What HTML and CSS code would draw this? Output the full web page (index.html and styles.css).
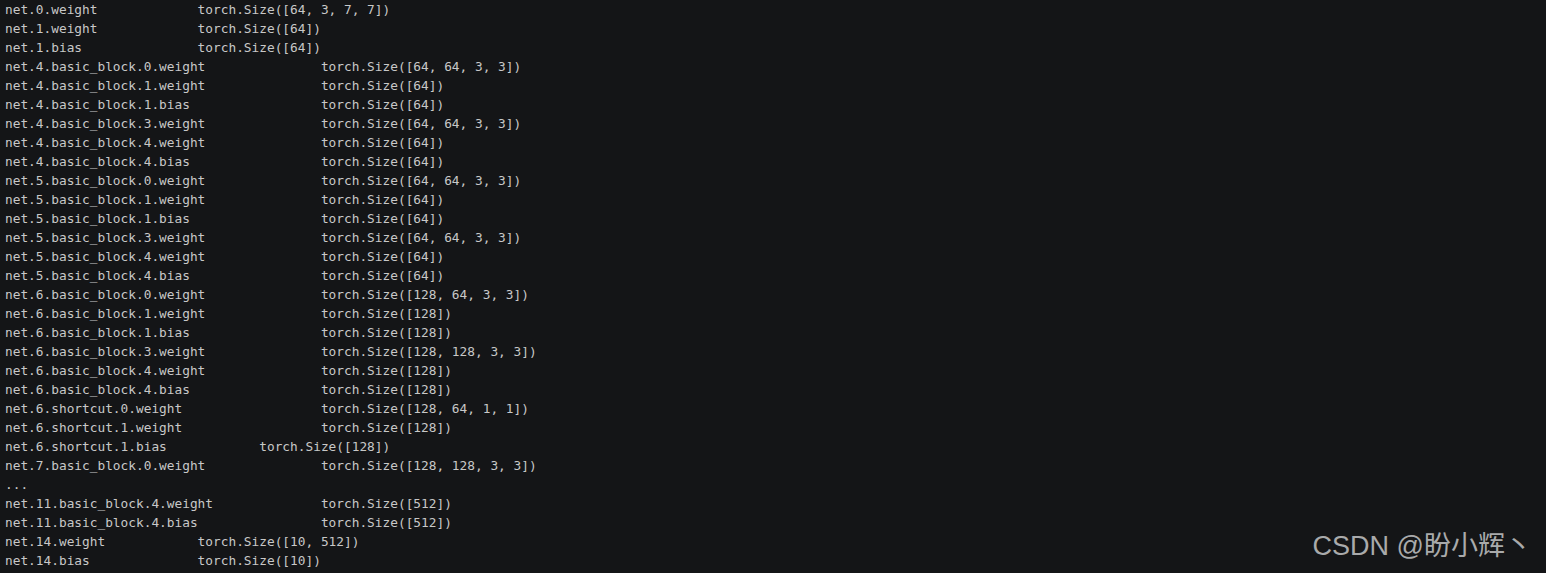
FILE: index.html
```html
<!DOCTYPE html>
<html>
<head>
<meta charset="utf-8">
<link rel="stylesheet" href="styles.css">
</head>
<body>
<div class="term"><pre class="out">net.0.weight             torch.Size([64, 3, 7, 7])
net.1.weight             torch.Size([64])
net.1.bias               torch.Size([64])
net.4.basic_block.0.weight               torch.Size([64, 64, 3, 3])
net.4.basic_block.1.weight               torch.Size([64])
net.4.basic_block.1.bias                 torch.Size([64])
net.4.basic_block.3.weight               torch.Size([64, 64, 3, 3])
net.4.basic_block.4.weight               torch.Size([64])
net.4.basic_block.4.bias                 torch.Size([64])
net.5.basic_block.0.weight               torch.Size([64, 64, 3, 3])
net.5.basic_block.1.weight               torch.Size([64])
net.5.basic_block.1.bias                 torch.Size([64])
net.5.basic_block.3.weight               torch.Size([64, 64, 3, 3])
net.5.basic_block.4.weight               torch.Size([64])
net.5.basic_block.4.bias                 torch.Size([64])
net.6.basic_block.0.weight               torch.Size([128, 64, 3, 3])
net.6.basic_block.1.weight               torch.Size([128])
net.6.basic_block.1.bias                 torch.Size([128])
net.6.basic_block.3.weight               torch.Size([128, 128, 3, 3])
net.6.basic_block.4.weight               torch.Size([128])
net.6.basic_block.4.bias                 torch.Size([128])
net.6.shortcut.0.weight                  torch.Size([128, 64, 1, 1])
net.6.shortcut.1.weight                  torch.Size([128])
net.6.shortcut.1.bias            torch.Size([128])
net.7.basic_block.0.weight               torch.Size([128, 128, 3, 3])
...
net.11.basic_block.4.weight              torch.Size([512])
net.11.basic_block.4.bias                torch.Size([512])
net.14.weight            torch.Size([10, 512])
net.14.bias              torch.Size([10])</pre><div class="watermark">CSDN @盼小辉丶</div></div>
</body>
</html>
```
FILE: styles.css
```css
html, body {
  margin: 0;
  padding: 0;
  background: #141517;
  height: 100%;
  overflow: hidden;
}
.term {
  position: relative;
  height: 573px;
  background: #141517;
}
.out {
  margin: 0;
  padding: 0 0 0 5px;
  font-family: "DejaVu Sans Mono", "Liberation Mono", monospace;
  font-size: 12.8px;
  line-height: 19px;
  color: #c8c8c8;
  white-space: pre;
}
.watermark {
  position: absolute;
  right: 14px;
  bottom: 11px;
  font-family: "Liberation Sans", "Noto Sans CJK SC", sans-serif;
  font-size: 27px;
  line-height: 31px;
  color: #a9aaab;
  white-space: nowrap;
}
```
